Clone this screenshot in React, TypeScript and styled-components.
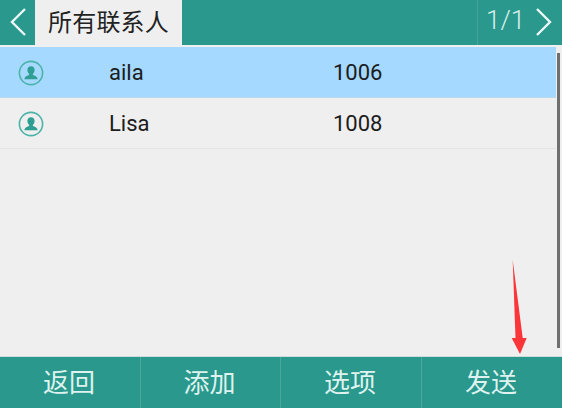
import styled, { createGlobalStyle } from 'styled-components';

const GlobalStyle = createGlobalStyle`
  html, body {
    margin: 0;
    padding: 0;
    background: #ffffff;
  }
  body {
    font-family: Roboto, "Noto Sans CJK SC", sans-serif;
  }
`;

const Screen = styled.div`
  position: relative;
  display: flex;
  flex-direction: column;
  width: 562px;
  height: 408px;
  overflow: hidden;
  background: #efefef;
`;

const Header = styled.header`
  display: flex;
  align-items: stretch;
  height: 45px;
  flex-shrink: 0;
  background: #2a988c;
`;

const BackButton = styled.div`
  display: flex;
  align-items: center;
  justify-content: center;
  width: 35px;
  padding-bottom: 2px;
`;

const Tab = styled.div`
  display: flex;
  align-items: center;
  justify-content: center;
  width: 147px;
  padding-bottom: 4px;
  box-sizing: border-box;
  background: #efefef;
  color: #222;
  font-size: 24px;
  letter-spacing: 0.2px;
`;

const Pager = styled.div`
  display: flex;
  align-items: center;
  margin-left: auto;
  width: 85px;
  padding: 0 0 2px 8px;
  box-sizing: border-box;
  border-left: 1px solid #45a499;
  color: #d8efeb;
  font-size: 26px;
  font-weight: 300;
  gap: 11px;
`;

const PageCount = styled.span`
  padding-bottom: 4px;
`;

const Body = styled.main`
  position: relative;
  flex: 1;
  padding: 2px 0 0;
`;

const Row = styled.div<{ $selected?: boolean }>`
  display: grid;
  grid-template-columns: 109px 224px 1fr;
  align-items: center;
  width: 556px;
  height: 50px;
  border-bottom: 1px solid ${({ $selected }) => ($selected ? '#bcd9ec' : '#e4e4e4')};
  background: ${({ $selected }) => ($selected ? '#a5d9ff' : 'transparent')};
  color: #1c1c1c;
  font-size: 22px;
`;

const Avatar = styled.span`
  display: flex;
  padding: 1px 0 0 18px;
`;

const Scrollbar = styled.div`
  position: absolute;
  top: 8px;
  right: 2px;
  width: 3px;
  height: 295px;
  background: #6f6f6f;
`;

const Footer = styled.footer`
  display: grid;
  grid-template-columns: 140px 140px 141px 141px;
  height: 52px;
  flex-shrink: 0;
  background: #2a988c;
  border-top: 1px solid #cfdcd9;
  box-sizing: border-box;
`;

const SoftKey = styled.div`
  display: flex;
  align-items: center;
  justify-content: center;
  padding: 0 2px 5px 0;
  color: #def3ef;
  font-size: 26px;
  & + & {
    border-left: 1px solid #4aa79c;
  }
`;

const Arrow = styled.svg`
  position: absolute;
  left: 508px;
  top: 258px;
`;

const Chevron = ({ flip }: { flip?: boolean }) => (
  <svg width="16" height="28" viewBox="0 0 16 28" style={flip ? { transform: 'scaleX(-1)' } : undefined}>
    <path d="M15 1 L2 14 L15 27" fill="none" stroke="#ecf8f6" strokeWidth="2.4" />
  </svg>
);

const PersonIcon = () => (
  <svg width="26" height="26" viewBox="0 0 26 26">
    <circle cx="13" cy="13" r="11.6" fill="none" stroke="#4cb3a8" strokeWidth="1.6" />
    <path
      d="M13 6.2c-2.2 0-3.6 1.7-3.6 3.9 0 1.6.7 3 1.7 3.8v1.2c-1.9.7-4.2 1.5-4.6 3.4v.8h13v-.8c-.4-1.9-2.7-2.7-4.6-3.4v-1.2c1-.8 1.7-2.2 1.7-3.8 0-2.2-1.4-3.9-3.6-3.9z"
      fill="#2f9f94"
    />
  </svg>
);

const contacts = [
  { name: 'aila', number: '1006', selected: true },
  { name: 'Lisa', number: '1008', selected: false },
];

const softKeys = ['返回', '添加', '选项', '发送'];

export default function App() {
  return (
    <>
      <GlobalStyle />
      <Screen>
        <Header>
          <BackButton>
            <Chevron />
          </BackButton>
          <Tab>所有联系人</Tab>
          <Pager>
            <PageCount>1/1</PageCount>
            <Chevron flip />
          </Pager>
        </Header>
        <Body>
          {contacts.map((contact) => (
            <Row key={contact.number} $selected={contact.selected}>
              <Avatar>
                <PersonIcon />
              </Avatar>
              <span>{contact.name}</span>
              <span>{contact.number}</span>
            </Row>
          ))}
          <Scrollbar />
        </Body>
        <Footer>
          {softKeys.map((label) => (
            <SoftKey key={label}>{label}</SoftKey>
          ))}
        </Footer>
        <Arrow width="24" height="100" viewBox="0 0 24 100">
          <path d="M4.7 2 L7.5 80 L3.7 80 L12 96 L18.7 80 L14.7 80 Z" fill="#fb3538" />
        </Arrow>
      </Screen>
    </>
  );
}
